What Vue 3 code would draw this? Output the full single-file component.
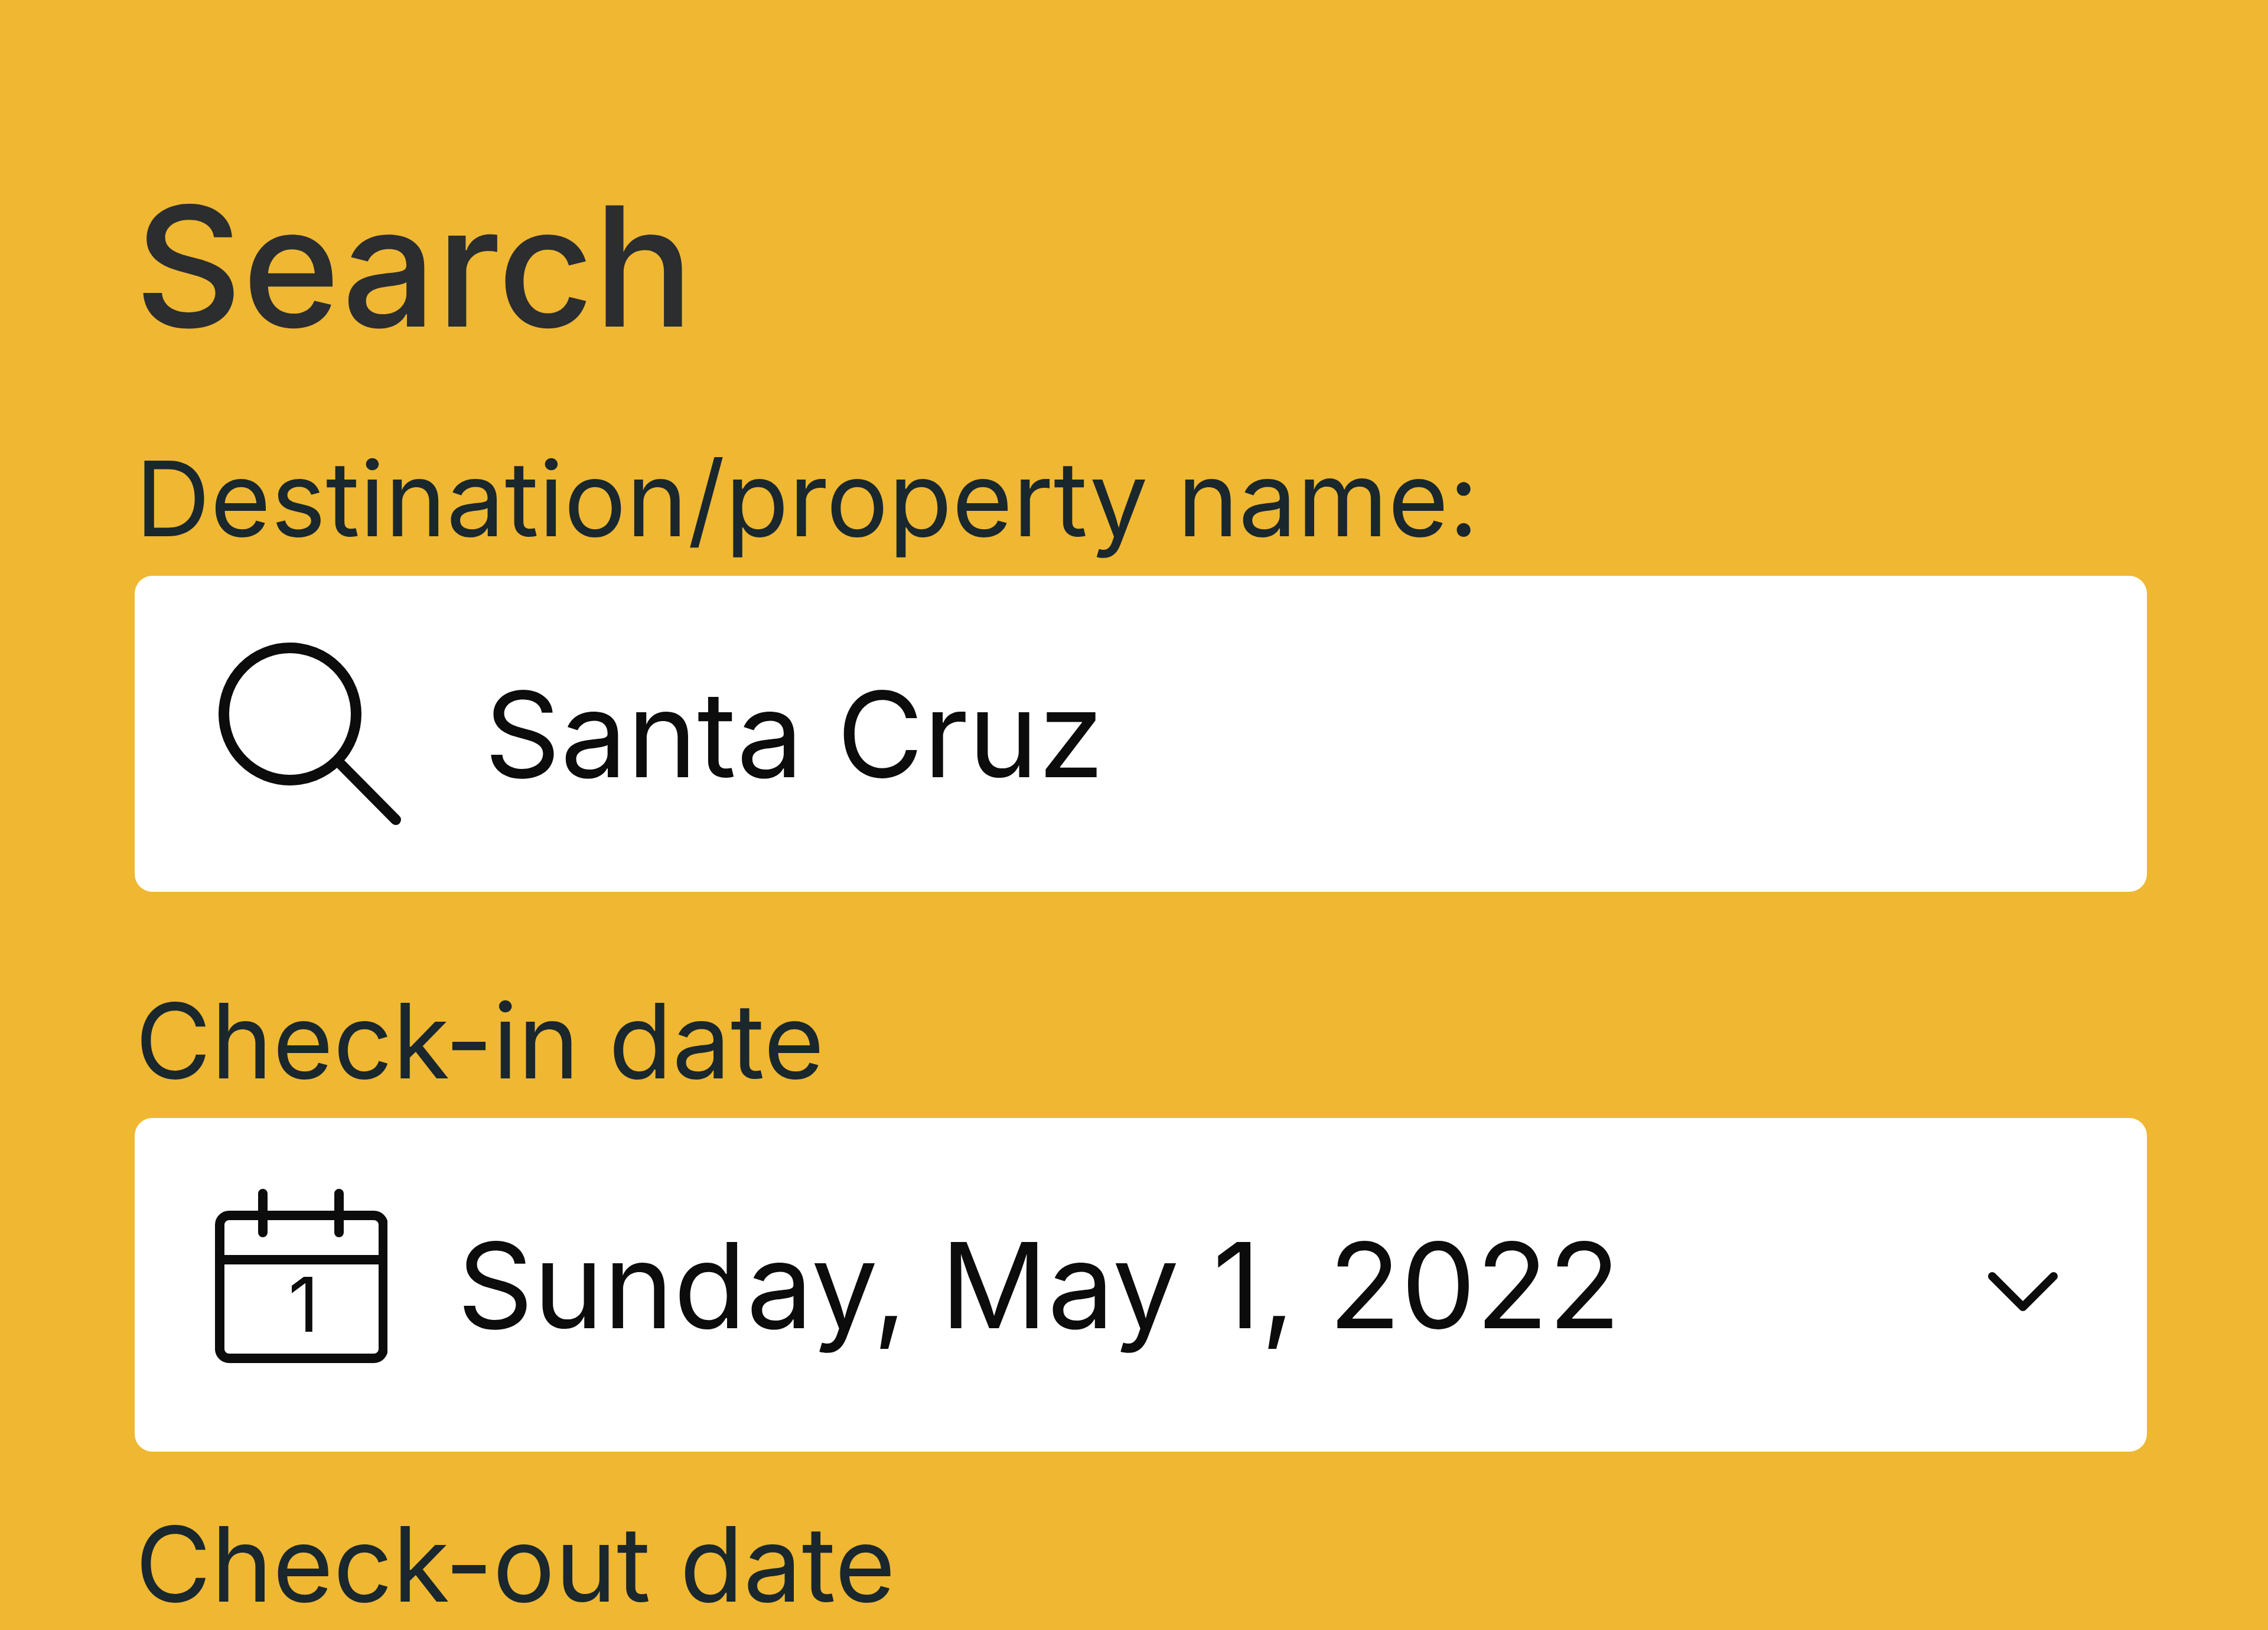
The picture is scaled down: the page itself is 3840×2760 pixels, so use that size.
<script setup>
import { ref } from 'vue'

const destination = ref('Santa Cruz')
const checkIn = ref('Sunday, May 1, 2022')
</script>

<template>
  <form class="search" @submit.prevent>
    <h1 class="title">Search</h1>

    <div class="field field-destination">
      <label class="label" for="destination">Destination/property name:</label>
      <div class="box box-text">
        <svg class="icon-search" viewBox="0 0 310 310" aria-hidden="true">
          <circle cx="121" cy="121" r="112" />
          <path d="M204 203 300 300" />
        </svg>
        <input id="destination" v-model="destination" class="value" type="text" />
      </div>
    </div>

    <div class="field field-date">
      <label class="label" for="check-in">Check-in date</label>
      <button id="check-in" class="box box-date" type="button" aria-haspopup="dialog">
        <svg class="icon-calendar" viewBox="0 0 292 326" aria-hidden="true">
          <rect x="8" y="45" width="277" height="242" rx="16" />
          <path d="M8 120H285M81 8V74M210 8V74" />
          <text x="150" y="242" text-anchor="middle">1</text>
        </svg>
        <span class="value">{{ checkIn }}</span>
        <svg class="icon-chevron" viewBox="0 0 120 98" aria-hidden="true">
          <path d="M8 34 60 86 112 34" />
        </svg>
      </button>
    </div>

    <p class="label">Check-out date</p>
  </form>
</template>

<style>
body {
  background: #efb732;
}
</style>

<style scoped>
.search {
  box-sizing: border-box;
  padding: 281px 205px 0 228px;
  color: #1a272c;
  font-family: Inter, "Liberation Sans", sans-serif;
}

.title {
  margin: 0 0 125px;
  color: #2b2d2f;
  font-size: 282px;
  font-weight: 500;
  line-height: 340px;
}

.field {
  display: flex;
  flex-direction: column;
  gap: 33px;
}

.field-destination {
  margin-bottom: 154px;
}

.field-date {
  margin-bottom: 92px;
}

.label {
  margin: 0;
  padding-left: 1px;
  font-size: 176px;
  line-height: 196px;
  white-space: nowrap;
}

.box {
  box-sizing: border-box;
  display: flex;
  align-items: center;
  width: 100%;
  border: 0;
  border-radius: 30px;
  background: #fff;
  color: #0c0c0c;
  font-family: inherit;
  text-align: left;
}

.box-text {
  gap: 140px;
  height: 535px;
  padding: 0 142px;
}

.box-date {
  gap: 118px;
  height: 565px;
  padding: 0 150px 0 136px;
}

.value {
  flex: 1;
  min-width: 0;
  padding: 0;
  border: 0;
  outline: 0;
  background: none;
  color: inherit;
  font-family: inherit;
  font-size: 201px;
  line-height: 260px;
  white-space: nowrap;
}

svg {
  flex: none;
  fill: none;
  stroke: #0c0c0c;
}

.icon-search {
  width: 310px;
  height: 310px;
  stroke-width: 18;
  stroke-linecap: round;
}

.icon-calendar {
  width: 292px;
  height: 326px;
  stroke-width: 16;
  stroke-linecap: round;
}

.icon-calendar text {
  fill: #0c0c0c;
  stroke: none;
  font-size: 128px;
}

.icon-chevron {
  width: 120px;
  height: 98px;
  stroke-width: 14;
  stroke-linecap: round;
  stroke-linejoin: round;
}
</style>
